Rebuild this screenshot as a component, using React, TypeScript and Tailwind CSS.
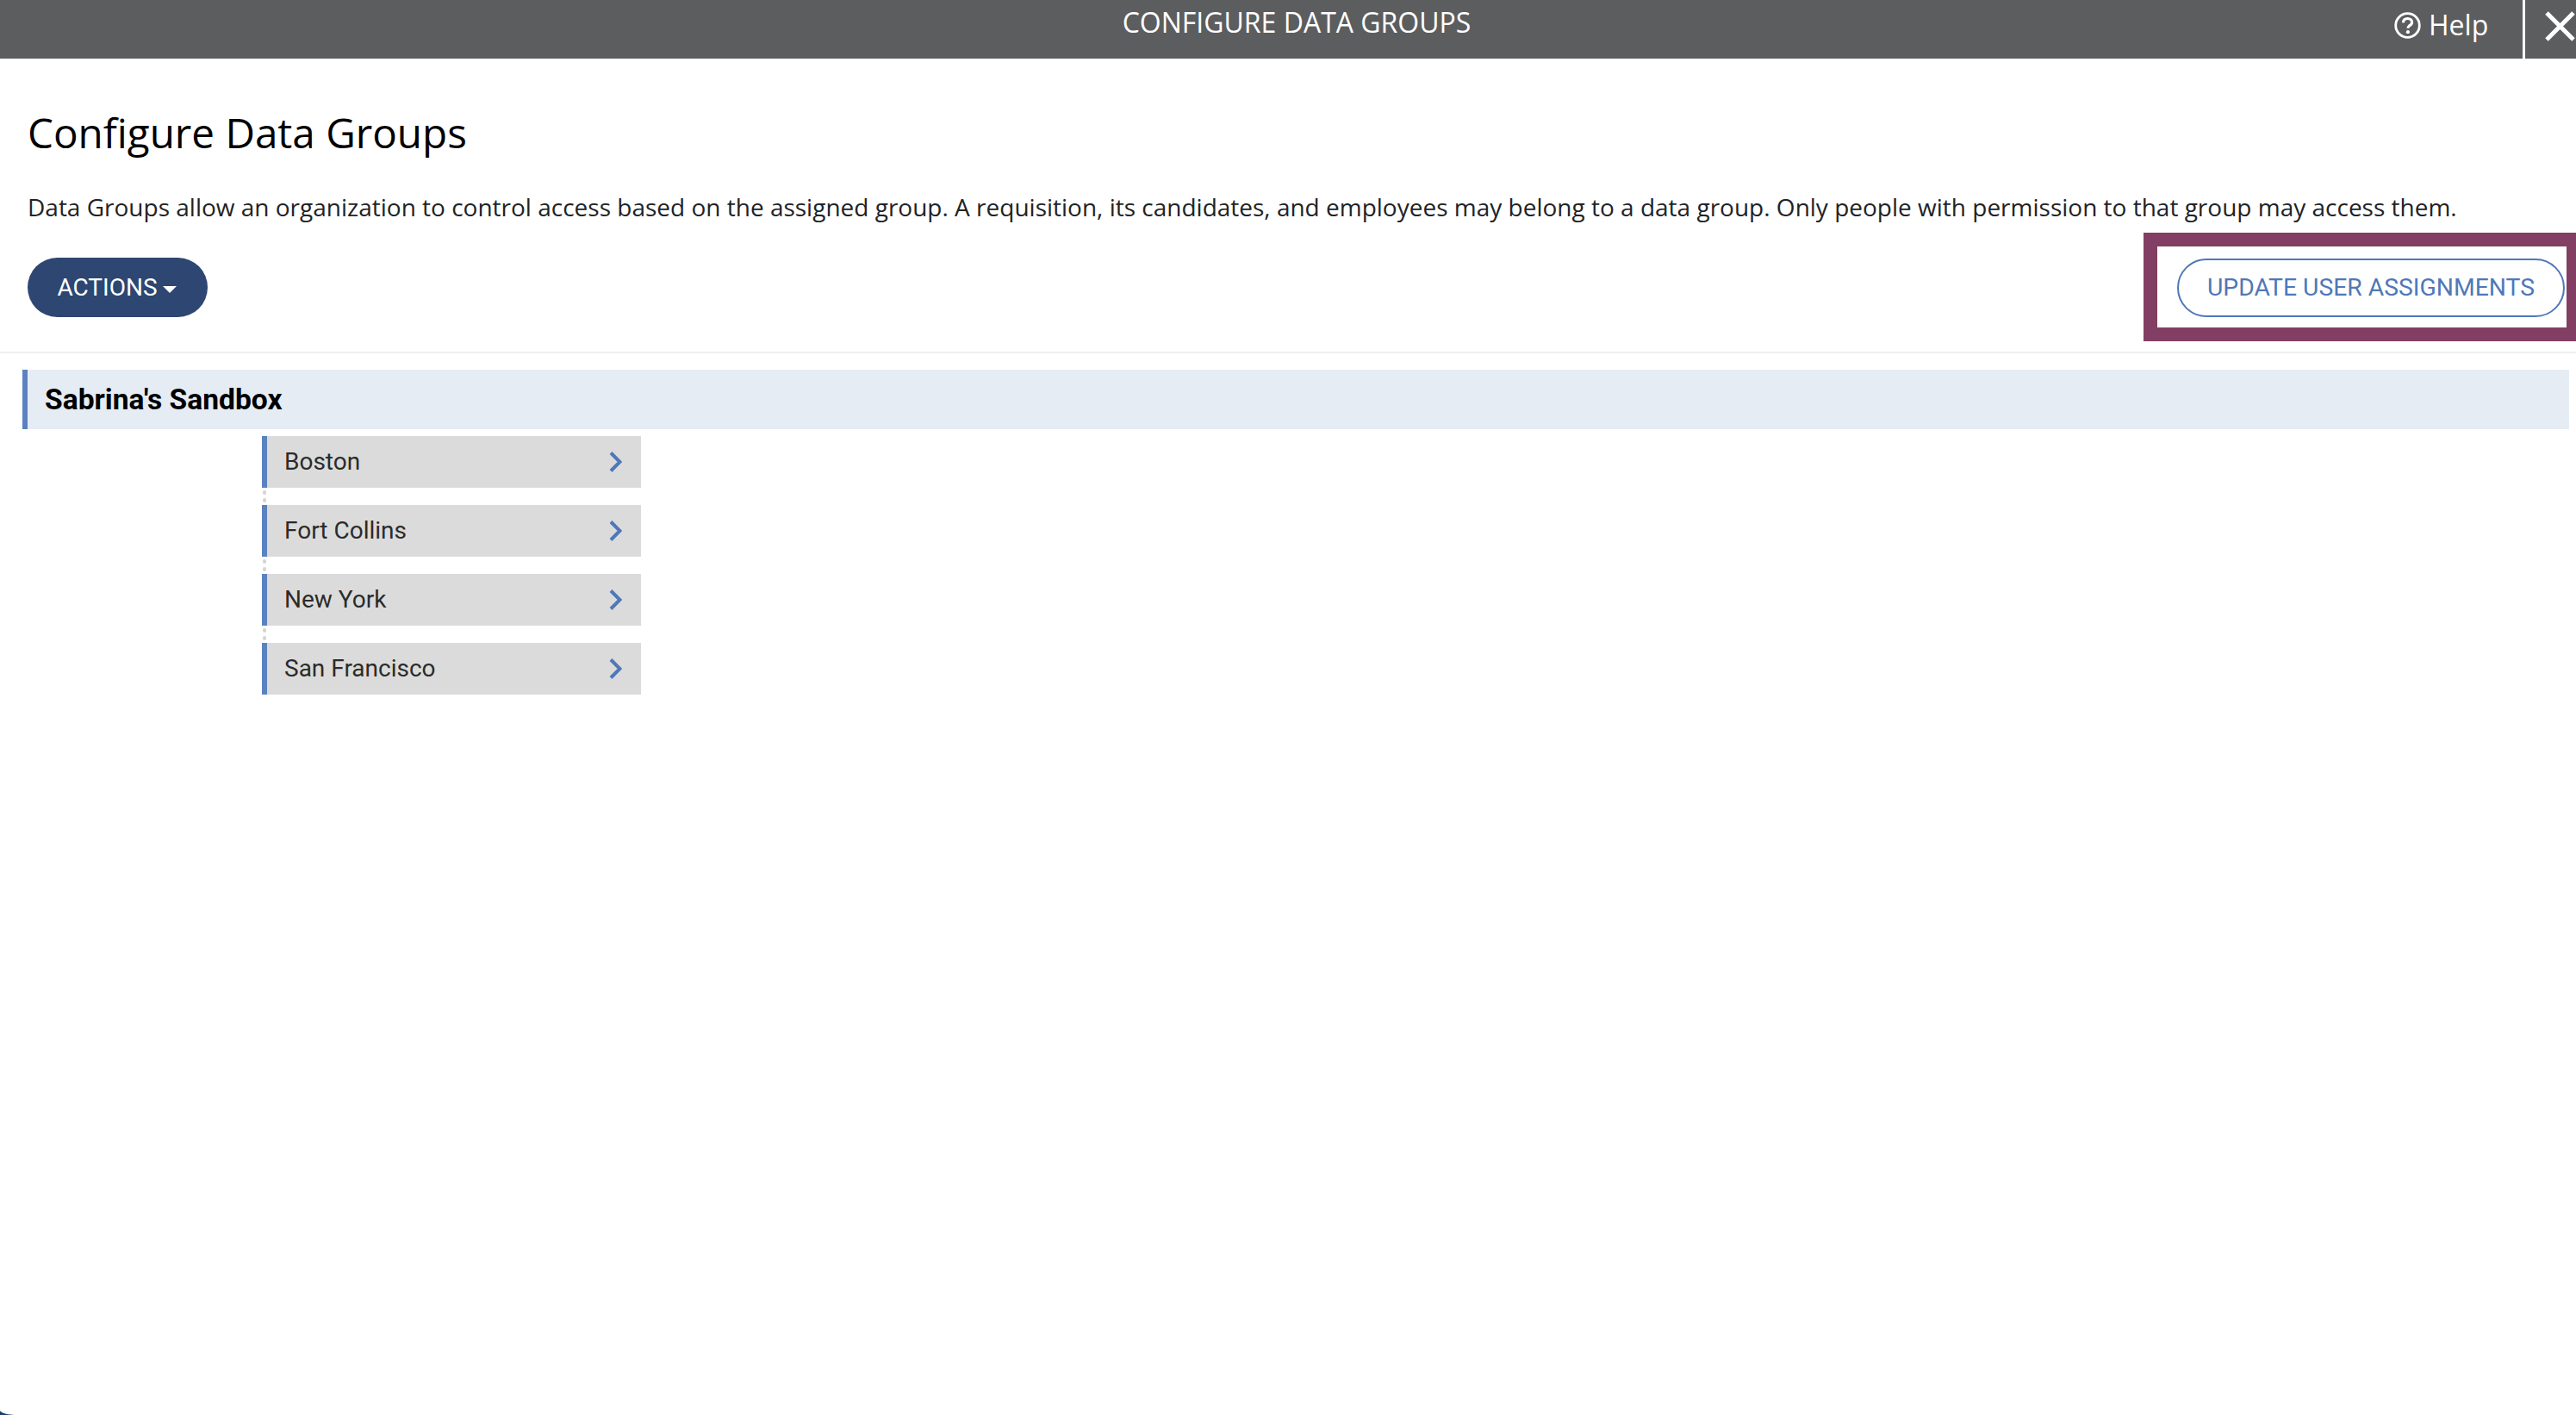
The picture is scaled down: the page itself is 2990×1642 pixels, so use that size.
const groups = ["Boston", "Fort Collins", "New York", "San Francisco"];

const HelpIcon = () => (
  <svg width="31" height="31" viewBox="0 0 31 31" fill="none" className="shrink-0">
    <circle cx="15.5" cy="15.5" r="13.800" stroke="white" strokeWidth="2.800" />
    <path
      d="M10.4 12.4c.2-3.200 2.400-4.900 5.200-4.900 2.900 0 5 1.800 5 4.200 0 2-1.200 3.100-2.700 4-1.300.8-1.900 1.500-1.900 3.100"
      stroke="white"
      strokeWidth="3.200"
    />
    <circle cx="15.900" cy="23.200" r="2.100" fill="white" />
  </svg>
);

const CloseIcon = () => (
  <svg width="35" height="35" viewBox="0 0 35 35" fill="none">
    <path d="M2 2 33 33M33 2 2 33" stroke="white" strokeWidth="5" />
  </svg>
);

const Chevron = () => (
  <svg width="15" height="24" viewBox="0 0 15 24" fill="none">
    <path d="M2 1.500 12.500 12 2 22.500" stroke="#4f78b8" strokeWidth="4" />
  </svg>
);

const App = () => {
  return (
    <div className="relative h-[1642px] w-[2990px] overflow-hidden bg-white font-['Open_Sans',sans-serif]">
      <header className="flex h-[68px] items-stretch bg-[#5c5d5f] text-white">
        <div className="flex-1 pl-[231px] pt-[3px] text-center text-[32px] leading-[46px]">
          CONFIGURE DATA GROUPS
        </div>
        <div className="flex w-[149px] items-center gap-[9px] pb-[10px] text-[32px]">
          <HelpIcon />
          <span>Help</span>
        </div>
        <div className="flex w-[62px] border-l-[3px] border-white pl-[23px] pt-[13px]">
          <CloseIcon />
        </div>
      </header>

      <h1 className="mt-[53px] pl-[32px] text-[47.600px] leading-[66px] text-black">
        Configure Data Groups
      </h1>
      <p className="mt-[33px] pl-[32px] text-[28px] leading-[40px] text-[#212326]">
        Data Groups allow an organization to control access based on the assigned group. A
        requisition, its candidates, and employees may belong to a data group. Only people with
        permission to that group may access them.
      </p>

      <div className="mt-[10px] flex items-start justify-between pl-[32px]">
        <button className="mt-[29px] flex h-[69px] w-[209px] items-center justify-center gap-[6px] rounded-full bg-[#2d4672] pr-[2px] font-['Roboto',sans-serif] text-[28px] text-white">
          ACTIONS
          <span className="mt-[4px] border-x-[8px] border-t-[8px] border-x-transparent border-t-white" />
        </button>
        <div className="-mr-[5px] flex h-[126px] w-[507px] items-center border-[16px] border-[#823f63] pl-[23px]">
          <button className="mt-[2px] h-[68px] w-[450px] rounded-full border-[2px] border-[#4f78b8] font-['Roboto',sans-serif] text-[28.300px] text-[#4f78b8]">
            UPDATE USER ASSIGNMENTS
          </button>
        </div>
      </div>

      <div className="mt-[12px] h-[2px] bg-[#efefef]" />

      <div className="ml-[26px] mr-[8px] mt-[19px] flex h-[69px] items-center border-l-[6px] border-[#5b82c0] bg-[#e6ecf4] pl-[20px] pt-[1px] font-['Roboto',sans-serif] text-[33.600px] font-bold text-black">
        Sabrina's Sandbox
      </div>

      <ul className="ml-[304px] mt-[8px] flex w-[440px] flex-col font-['Roboto',sans-serif]">
        {groups.map((name, i) => (
          <li key={name}>
            {i > 0 && (
              <div className="flex h-[20px] w-[6px] flex-col items-center justify-center gap-[4px]">
                <span className="h-[5px] w-[4px] rounded-full bg-[#d4d4d4]" />
                <span className="h-[5px] w-[4px] rounded-full bg-[#d4d4d4]" />
              </div>
            )}
            <div className="flex h-[60px] items-center justify-between border-l-[6px] border-[#5b82c0] bg-[#dbdbdb] pl-[20px] pr-[22px] text-[28px] text-[#2b2b2b]">
              {name}
              <Chevron />
            </div>
          </li>
        ))}
      </ul>

      {/* window corner showing through at the bottom left */}
      <svg className="absolute bottom-0 left-0" width="16" height="5" viewBox="0 0 16 5">
        <path d="M0 0C2 2.500 6 4 16 5H0Z" fill="#1e3f66" />
      </svg>
    </div>
  );
};

export default App;
